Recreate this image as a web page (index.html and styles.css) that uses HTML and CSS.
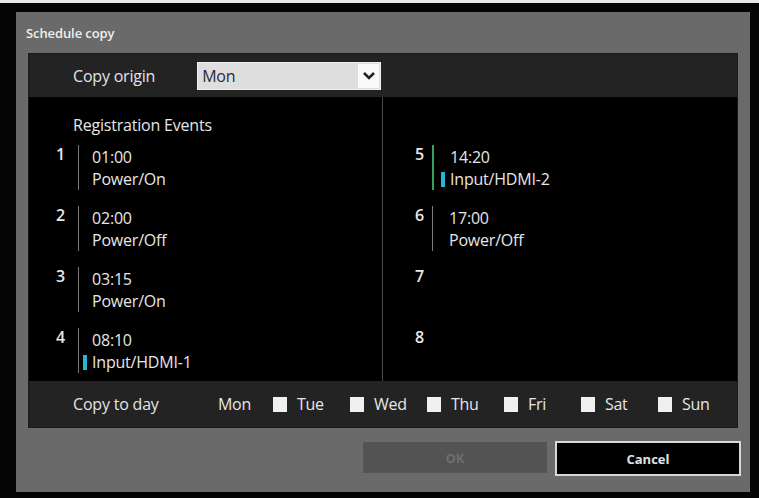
FILE: index.html
```html
<!DOCTYPE html>
<html lang="en">
<head>
    <meta charset="UTF-8">
    <title>Schedule copy</title>
    <link rel="stylesheet" href="styles.css">
</head>
<body>
    <div class="screen">
        <div class="dialog">
            <div class="title">Schedule copy</div>

            <div class="panel">
                <div class="origin-row">
                    <span class="row-label">Copy origin</span>
                    <div class="select">
                        <span class="select-value">Mon</span>
                        <span class="select-btn">
                            <svg width="14" height="10" viewBox="0 0 14 10"><path d="M2 2 L7 7 L12 2" fill="none" stroke="#222" stroke-width="2.6"/></svg>
                        </span>
                    </div>
                </div>

                <div class="events">
                    <div class="col">
                        <div class="col-head">Registration Events</div>
                        <div class="ev">
                            <span class="num">1</span>
                            <div class="ev-body">
                                <div>01:00</div>
                                <div>Power/On</div>
                            </div>
                        </div>
                        <div class="ev">
                            <span class="num">2</span>
                            <div class="ev-body">
                                <div>02:00</div>
                                <div>Power/Off</div>
                            </div>
                        </div>
                        <div class="ev">
                            <span class="num">3</span>
                            <div class="ev-body">
                                <div>03:15</div>
                                <div>Power/On</div>
                            </div>
                        </div>
                        <div class="ev">
                            <span class="num">4</span>
                            <div class="ev-body">
                                <div>08:10</div>
                                <div><span class="tag"></span>Input/HDMI-1</div>
                            </div>
                        </div>
                    </div>
                    <div class="col col-right">
                        <div class="col-head"></div>
                        <div class="ev">
                            <span class="num">5</span>
                            <div class="ev-body active">
                                <div>14:20</div>
                                <div><span class="tag"></span>Input/HDMI-2</div>
                            </div>
                        </div>
                        <div class="ev">
                            <span class="num">6</span>
                            <div class="ev-body">
                                <div>17:00</div>
                                <div>Power/Off</div>
                            </div>
                        </div>
                        <div class="ev">
                            <span class="num">7</span>
                        </div>
                        <div class="ev">
                            <span class="num">8</span>
                        </div>
                    </div>
                </div>

                <div class="days-row">
                    <span class="row-label days-label">Copy to day</span>
                    <span class="day-mon">Mon</span>
                    <label class="day"><span class="box"></span>Tue</label>
                    <label class="day"><span class="box"></span>Wed</label>
                    <label class="day"><span class="box"></span>Thu</label>
                    <label class="day"><span class="box"></span>Fri</label>
                    <label class="day"><span class="box"></span>Sat</label>
                    <label class="day"><span class="box"></span>Sun</label>
                </div>
            </div>

            <div class="buttons">
                <button class="btn btn-ok" disabled>OK</button>
                <button class="btn btn-cancel">Cancel</button>
            </div>
        </div>
    </div>
</body>
</html>
```

FILE: styles.css
```css
body {
    margin: 0;
    background: #000;
    font-family: "Open Sans", "Noto Sans", sans-serif;
    color: #e6e6e6;
}

.screen {
    width: 759px;
    height: 498px;
    box-sizing: border-box;
    border-top: 3px solid #e8e8e8;
    padding: 9px 9px 0 16px;
    background: #050505;
}

.dialog {
    width: 734px;
    height: 480px;
    background: #6a6a6a;
    padding: 0 12px;
    box-sizing: border-box;
}

.title {
    height: 41px;
    line-height: 42px;
    padding-left: 10px;
    margin-left: -12px;
    font-size: 13px;
    font-weight: 600;
    color: #eee;
    letter-spacing: -0.1px;
}

.panel {
    background: #000;
    border: 1px solid #1a1a1a;
}

.origin-row {
    height: 43px;
    background: #232323;
    display: flex;
    align-items: center;
    padding-left: 44px;
}

.row-label {
    font-size: 16px;
    letter-spacing: -0.2px;
    color: #e4e4e4;
}

.select {
    margin-left: 42px;
    width: 184px;
    height: 28px;
    box-sizing: border-box;
    background: #dedede;
    border: 1px solid #f2f2f2;
    display: flex;
    align-items: center;
}

.select-value {
    flex: 1;
    padding-left: 4px;
    color: #2a2a3a;
    font-size: 16px;
    letter-spacing: -0.3px;
}

.select-btn {
    width: 21px;
    height: 24px;
    margin-right: 1px;
    background: #fafafa;
    display: flex;
    align-items: center;
    justify-content: center;
}

.events {
    height: 284px;
    display: flex;
}

.col {
    width: 354px;
    padding-left: 25px;
    box-sizing: border-box;
    border-right: 1px solid #4a4a4a;
}

.col-right {
    flex: 1;
    border-right: none;
    padding-left: 30px;
}

.col-head {
    height: 20px;
    margin-top: 18px;
    margin-bottom: 10px;
    padding-left: 19px;
    font-size: 16px;
    letter-spacing: -0.2px;
    line-height: 20px;
}

.ev {
    height: 61px;
    display: flex;
    align-items: flex-start;
}

.num {
    width: 22px;
    font-size: 16px;
    font-weight: 600;
    line-height: 18px;
    padding-left: 2px;
    color: #e8e8e8;
}

.col-right .num {
    width: 17px;
}

.ev-body {
    border-left: 1px solid #7a7a7a;
    padding-left: 13px;
    font-size: 16px;
    letter-spacing: -0.2px;
    line-height: 22px;
    padding-top: 1px;
}

.col-right .ev-body {
    padding-left: 16px;
}

.ev-body.active {
    border-left: 2px solid #3aa060;
    padding-left: 16px;
}

.tag {
    display: inline-block;
    width: 4px;
    height: 15px;
    background: #2ab4d8;
    margin-left: -9px;
    margin-right: 5px;
    vertical-align: -2px;
}

.days-row {
    height: 46px;
    background: #232323;
    display: flex;
    align-items: center;
    padding-left: 44px;
}

.days-label {
    width: 145px;
}

.day-mon {
    width: 55px;
    font-size: 16px;
    letter-spacing: -0.3px;
}

.day {
    width: 77px;
    display: flex;
    align-items: center;
    font-size: 16px;
    letter-spacing: -0.3px;
}

.box {
    width: 14px;
    height: 15px;
    background: #f0f0f0;
    margin-right: 10px;
}

.buttons {
    display: flex;
    justify-content: flex-end;
    gap: 8px;
    margin-top: 13px;
    margin-right: -3px;
}

.btn {
    font-family: "Open Sans", "Noto Sans", sans-serif;
    font-size: 13px;
    font-weight: 700;
    width: 184px;
    height: 33px;
    border-radius: 0;
}

.btn-ok {
    background: #535353;
    color: #6e6e6e;
    border: 1px solid #555;
    margin-top: 1px;
    height: 31px;
}

.btn-cancel {
    background: #000;
    color: #e0e0e0;
    border: 2px solid #d8d8d8;
    width: 186px;
    height: 35px;
}
```
